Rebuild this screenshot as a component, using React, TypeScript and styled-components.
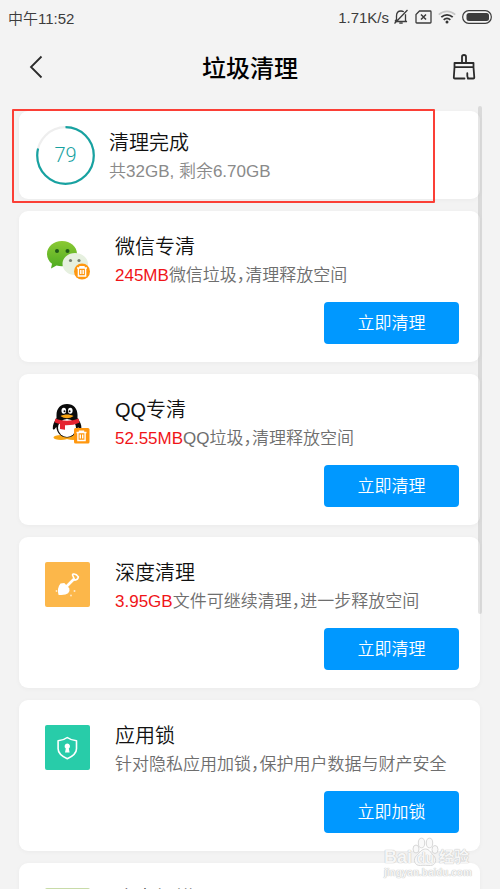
import React from "react";
import styled, { createGlobalStyle } from "styled-components";

const GlobalStyle = createGlobalStyle`
  * { box-sizing: border-box; }
  body { margin: 0; background: #f3f3f3; }
  body, button { font-family: "Liberation Sans", "Noto Sans CJK SC", sans-serif; font-weight: 350; }
  h1, h2, p { margin: 0; font-weight: 350; }
  svg { display: block; }
`;

const Screen = styled.div`
  position: relative;
  display: flex;
  flex-direction: column;
  height: 100vh;
  overflow: hidden;
  background: #f3f3f3;
`;

const StatusBar = styled.div`
  display: flex;
  justify-content: space-between;
  align-items: center;
  height: 34px;
  padding: 0 8px;
  font-size: 15px;
  color: #3c3c3c;
`;

const StatusIcons = styled.div`
  display: flex;
  align-items: center;
  gap: 6px;
`;

const NetworkSpeed = styled.span`
  margin-right: -2px;
`;

const Header = styled.header`
  display: grid;
  grid-template-columns: 44px 1fr 44px;
  align-items: center;
  height: 66px;
  padding: 0 14px;
`;

const Title = styled.h1`
  padding-top: 3px;
  text-align: center;
  font-size: 24px;
  font-weight: 500;
  line-height: 36px;
  color: #000;
`;

const IconButton = styled.button`
  display: flex;
  align-items: center;
  justify-content: center;
  height: 44px;
  padding: 0;
  border: 0;
  background: none;
  color: #2b2b2b;
`;

const List = styled.main`
  display: flex;
  flex: 1;
  flex-direction: column;
  gap: 12px;
  min-height: 0;
  padding: 11px 20px 0 19px;
`;

const Card = styled.section`
  flex: none;
  border-radius: 9px;
  background: #fff;
  box-shadow: 0 1px 5px rgba(0, 0, 0, 0.04);
`;

const SummaryCard = styled(Card)`
  display: flex;
  align-items: center;
  gap: 14px;
  height: 88px;
  padding: 2px 17px 0;
`;

const FeatureCard = styled(Card)`
  display: grid;
  grid-template-columns: 44px 1fr;
  column-gap: 26px;
  padding: 20px 21px 18px 26px;
`;

const IconSlot = styled.div`
  padding-top: 5px;
`;

const CardTitle = styled.h2`
  font-size: 20px;
  line-height: 32px;
  color: #111;
`;

const Detail = styled.p`
  font-size: 17px;
  line-height: 26px;
  color: #6e6e6e;
  font-feature-settings: "halt";
  white-space: nowrap;
`;

const SummaryDetail = styled(Detail)`
  color: #8a8a8a;
`;

const Amount = styled.span`
  color: #f01418;
`;

const ActionRow = styled.div`
  display: flex;
  grid-column: 1 / -1;
  justify-content: flex-end;
  padding-top: 13px;
`;

const ActionButton = styled.button`
  width: 135px;
  height: 42px;
  padding: 0 0 3px;
  border: 0;
  border-radius: 4px;
  background: #0098ff;
  color: #fff;
  font-size: 17px;
`;

const Gauge = styled.div`
  display: grid;
  place-items: center;
  width: 59px;
  height: 59px;
  margin-bottom: 2px;
  font-family: Roboto, sans-serif;
  font-size: 20px;
  color: #17a2a1;

  > * { grid-area: 1 / 1; }
`;

const Highlight = styled.div`
  position: absolute;
  top: 109px;
  left: 12px;
  right: 65px;
  height: 94px;
  border: 2px solid #fb3f36;
  border-radius: 1px;
  pointer-events: none;
`;

const ScrollThumb = styled.div`
  position: absolute;
  top: 106px;
  right: 18px;
  width: 4px;
  height: 508px;
  border-radius: 2px;
  background: rgba(0, 0, 0, 0.1);
`;

const Watermark = styled.div`
  position: absolute;
  right: 24px;
  bottom: 10px;
  width: 92px;
  color: #f6f6f6;
  pointer-events: none;
  text-shadow: 0 0 1px #bbb, 0 0 1px #ccc;
`;

const WatermarkBrand = styled.div`
  display: flex;
  align-items: flex-end;
  font-size: 18px;
  font-weight: 700;
  line-height: 20px;
`;

const WatermarkName = styled.span`
  font-size: 15px;
`;

const Paw = styled.span`
  display: grid;
  place-items: end center;
  width: 27px;
  height: 30px;
  font-size: 14px;
  line-height: 18px;

  > * { grid-area: 1 / 1; z-index: 1; }
`;

const WatermarkSite = styled.div`
  font-size: 10px;
  font-weight: 700;
  line-height: 12px;
`;

const MutedBell = () => (
  <svg width="16" height="16" viewBox="0 0 16 16" fill="none" stroke="#3c3c3c" strokeWidth="1.3">
    <path d="M2 12.5H14M3.5 12V7C3.5 3.8 5.3 2 8 2c1 0 2 .3 2.800.8M12.500 5.200V12l1.500.6M3.500 10.500 2 12.500M14.500 1 1.500 14.500M6.300 14.200h3.400" />
  </svg>
);

const NoSim = () => (
  <svg width="17" height="14" viewBox="0 0 17 14" fill="none" stroke="#3c3c3c" strokeWidth="1.3">
    <path d="M4.500 1h10.700q.8 0 .8.8v10.400q0 .8-.8.8H1.800q-.8 0-.8-.8V4.500Z" />
    <path d="m6 4.500 5 5M11 4.500l-5 5" strokeWidth="1.5" />
  </svg>
);

const Wifi = () => (
  <svg width="18" height="14" viewBox="0 0 18 14" fill="none" strokeWidth="1.8">
    <path d="M.8 4.600C5.500.2 12.500.2 17.200 4.600" stroke="#c6c6c6" />
    <path d="M3.300 7.200C6.600 4.100 11.400 4.100 14.700 7.200M5.700 9.800C7.600 8 10.400 8 12.300 9.800" stroke="#333" />
    <circle cx="9" cy="12" r="1.5" fill="#333" />
  </svg>
);

const Battery = () => (
  <svg width="30" height="14" viewBox="0 0 30 14">
    <rect x=".7" y=".7" width="28.6" height="12.6" rx="6" fill="none" stroke="#3c3c3c" strokeWidth="1.2" />
    <rect x="4.5" y="3" width="22.5" height="8" rx="2.5" fill="#3c3c3c" />
  </svg>
);

const BackIcon = () => (
  <svg width="14" height="24" viewBox="0 0 14 24" fill="none" stroke="currentColor" strokeWidth="1.8">
    <path d="M12.500 1.500 2 12l10.500 10.500" />
  </svg>
);

const BroomIcon = () => (
  <svg width="24" height="28" viewBox="0 0 24 28" fill="none" stroke="currentColor" strokeWidth="1.8" strokeLinejoin="round" strokeLinecap="round">
    <path d="M10 10V3.800q0-1.800 2-1.800t2 1.800V10M2.500 10h19v4.200h-19ZM2.500 14.200 1.800 24.500q0 1 1 1H12.500M21.500 14.200l.8 10.300q0 1-1 1h-5.500M15.300 20.200v2.800q.1 1.600 1.200 2.500" />
  </svg>
);

const TrashGlyph = ({ x, y }: { x: number; y: number }) => (
  <g transform={`translate(${x} ${y})`} fill="none" stroke="#fff" strokeWidth="1.4">
    <path d="M0 2h10M3 2V.7h4V2M1.400 2v8h7.200V2M3.800 4v4M6.200 4v4" />
  </g>
);

const WechatIcon = () => (
  <svg width="46" height="46" viewBox="0 -1 46 46">
    <defs>
      <linearGradient id="chat" x1="0" y1="0" x2="0" y2="1">
        <stop stopColor="#8bc934" />
        <stop offset="1" stopColor="#4cab20" />
      </linearGradient>
    </defs>
    <path d="M17 4C8.500 4 2 9.700 2 17c0 4.200 2 7.500 5 9.800L6 31.500l5.500-3c1.700.6 3.500.8 5.500.8 8.500 0 15-5.500 15-12.500S25.500 4 17 4Z" fill="url(#chat)" />
    <circle cx="12" cy="14" r="2" fill="#215c18" />
    <circle cx="22.500" cy="14" r="2" fill="#215c18" />
    <path d="M30 16c-7 0-12.500 4.800-12.500 11S23 38 30 38c2 0 3.500-.3 5-.8L40 39V34c2-2 3-4.200 3-7 0-6.200-6-11-13-11Z" fill="#e6f0df" />
    <circle cx="25.500" cy="23.500" r="1.600" fill="#778170" />
    <circle cx="34" cy="23.500" r="1.600" fill="#778170" />
    <circle cx="37" cy="34.500" r="8" fill="#ff970f" />
    <TrashGlyph x={32} y={29} />
  </svg>
);

const QQIcon = () => (
  <svg width="46" height="46" viewBox="0 -1 46 46">
    <ellipse cx="16" cy="37.500" rx="7.500" ry="2.500" fill="#f8a515" />
    <ellipse cx="28" cy="37.500" rx="7.500" ry="2.500" fill="#f8a515" />
    <path d="M22 4c-6.500 0-10.500 4.500-10.500 11v3C9.500 21 7.500 25 7.800 28.500c.2 2 1.700 1.200 3.500-1.500C12 33 16 37.500 22 37.500S32 33 33 27c1.500 2.700 3 3.500 3.400 1.500.4-3.500-1.700-7.500-3.900-10.500v-3C32.500 8.500 28.500 4 22 4Z" fill="#0b0b0b" />
    <ellipse cx="22" cy="28" rx="9" ry="9" fill="#fff" />
    <path d="M10.500 18.500c7 3 16 3 23 0l1 4.200c-4 1.700-8 2.500-13 2.500l-1.500 0v4.500l-5-.7v-5c-2-.4-4-1-5.500-1.700Z" fill="#e52330" />
    <ellipse cx="18.800" cy="10.800" rx="2.300" ry="3" fill="#fff" />
    <ellipse cx="25.300" cy="10.800" rx="2.300" ry="3" fill="#fff" />
    <circle cx="19.500" cy="11.300" r="1" fill="#111" />
    <circle cx="24.600" cy="11.300" r="1" fill="#111" />
    <path d="M15.500 16c4-2 9-2 13 0-4 3-9 3-13 0Z" fill="#f8a515" />
    <rect x="29" y="28" width="15.500" height="15.500" rx="1.500" fill="#ff970f" />
    <TrashGlyph x={31.5} y={30.5} />
  </svg>
);

const ShovelIcon = () => (
  <svg width="45" height="45" viewBox="0 0 45 45">
    <rect width="45" height="45" rx="2" fill="#fcb74a" />
    <path d="m20 26 9-9" stroke="#fff" strokeWidth="2.6" />
    <path d="m27.500 13 .5-.9c2-.6 3.500 0 5.400 2.800-.3 2-1.300 3-3.600 3.300Z" fill="none" stroke="#fff" strokeWidth="1.6" strokeLinejoin="round" />
    <path d="m15.500 21.500 3.800-.4 5 5.200q1 3-1.200 5-2.500 2.200-9.500 1.600-2-6.500 1.900-11.400Z" fill="#fff" />
    <g fill="#fff" opacity=".7">
      <circle cx="11.500" cy="29" r=".9" />
      <circle cx="26" cy="33.500" r=".9" />
      <circle cx="29.500" cy="29" r="1" />
    </g>
  </svg>
);

const ShieldIcon = () => (
  <svg width="45" height="45" viewBox="0 0 45 45">
    <rect width="45" height="45" rx="2" fill="#28cca9" />
    <path d="M22.300 12.500c2.500 2 5.500 2.900 9.200 3.200v8q0 5.800-9.200 10-9.200-4.200-9.200-10v-8c3.700-.3 6.700-1.200 9.200-3.200Z" fill="none" stroke="#fff" strokeWidth="1.6" strokeLinejoin="round" />
    <path d="M22.300 18.500a2.800 2.800 0 0 1 1.500 5.100l.8 3.900h-4.600l.8-3.900a2.800 2.800 0 0 1 1.500-5.100Z" fill="#fff" />
  </svg>
);

const ScanIcon = () => (
  <svg width="45" height="45" viewBox="0 0 45 45">
    <rect width="45" height="45" rx="2" fill="#c8dba8" />
  </svg>
);

interface Feature {
  title: string;
  amount?: string;
  detail: string;
  action: string;
  Icon: React.FC;
}

const features: Feature[] = [
  { title: "微信专清", amount: "245MB", detail: "微信垃圾，清理释放空间", action: "立即清理", Icon: WechatIcon },
  { title: "QQ专清", amount: "52.55MB", detail: "QQ垃圾，清理释放空间", action: "立即清理", Icon: QQIcon },
  { title: "深度清理", amount: "3.95GB", detail: "文件可继续清理，进一步释放空间", action: "立即清理", Icon: ShovelIcon },
  { title: "应用锁", detail: "针对隐私应用加锁，保护用户数据与财产安全", action: "立即加锁", Icon: ShieldIcon },
];

export default function App() {
  return (
    <Screen>
      <GlobalStyle />
      <StatusBar>
        <span>中午11:52</span>
        <StatusIcons>
          <NetworkSpeed>1.71K/s</NetworkSpeed>
          <MutedBell />
          <NoSim />
          <Wifi />
          <Battery />
        </StatusIcons>
      </StatusBar>
      <Header>
        <IconButton aria-label="返回"><BackIcon /></IconButton>
        <Title>垃圾清理</Title>
        <IconButton aria-label="清理"><BroomIcon /></IconButton>
      </Header>
      <List>
        <SummaryCard>
          <Gauge>
            <svg width="59" height="59" viewBox="0 0 59 59" fill="none" strokeWidth="2.2">
              <circle cx="29.500" cy="29.500" r="28.300" stroke="#eeeeee" />
              <circle cx="29.500" cy="29.500" r="28.300" stroke="#17a2a1" pathLength="100" strokeDasharray="79 21" transform="rotate(-90 29.500 29.500)" />
            </svg>
            <span>79</span>
          </Gauge>
          <div>
            <CardTitle>清理完成</CardTitle>
            <SummaryDetail>共32GB, 剩余6.70GB</SummaryDetail>
          </div>
        </SummaryCard>
        {features.map(({ title, amount, detail, action, Icon }) => (
          <FeatureCard key={title}>
            <IconSlot><Icon /></IconSlot>
            <div>
              <CardTitle>{title}</CardTitle>
              <Detail>
                {amount && <Amount>{amount}</Amount>}
                {detail}
              </Detail>
            </div>
            <ActionRow>
              <ActionButton>{action}</ActionButton>
            </ActionRow>
          </FeatureCard>
        ))}
        <FeatureCard>
          <IconSlot><ScanIcon /></IconSlot>
          <CardTitle>病毒扫描</CardTitle>
        </FeatureCard>
      </List>
      <ScrollThumb />
      <Highlight />
      <Watermark>
        <WatermarkBrand>
          <span>Bai</span>
          <Paw>
            <svg width="27" height="30" viewBox="0 0 27 30" fill="#f9f9f9" stroke="#d8d8d8" strokeWidth="1">
              <ellipse cx="4" cy="12" rx="3" ry="4" />
              <ellipse cx="9.500" cy="6" rx="3.200" ry="4.800" />
              <ellipse cx="17.500" cy="6" rx="3.200" ry="4.800" />
              <ellipse cx="23" cy="12.500" rx="3" ry="4" />
              <path d="M13.500 12c4 0 5 4 8 6.500 4 4 2 10-3 10-3 0-7-.5-10 0-6 .5-8-6-4-10 3.500-3 5-6.500 9-6.500Z" />
            </svg>
            <span>du</span>
          </Paw>
          <WatermarkName>经验</WatermarkName>
        </WatermarkBrand>
        <WatermarkSite>jingyan.baidu.com</WatermarkSite>
      </Watermark>
    </Screen>
  );
}
